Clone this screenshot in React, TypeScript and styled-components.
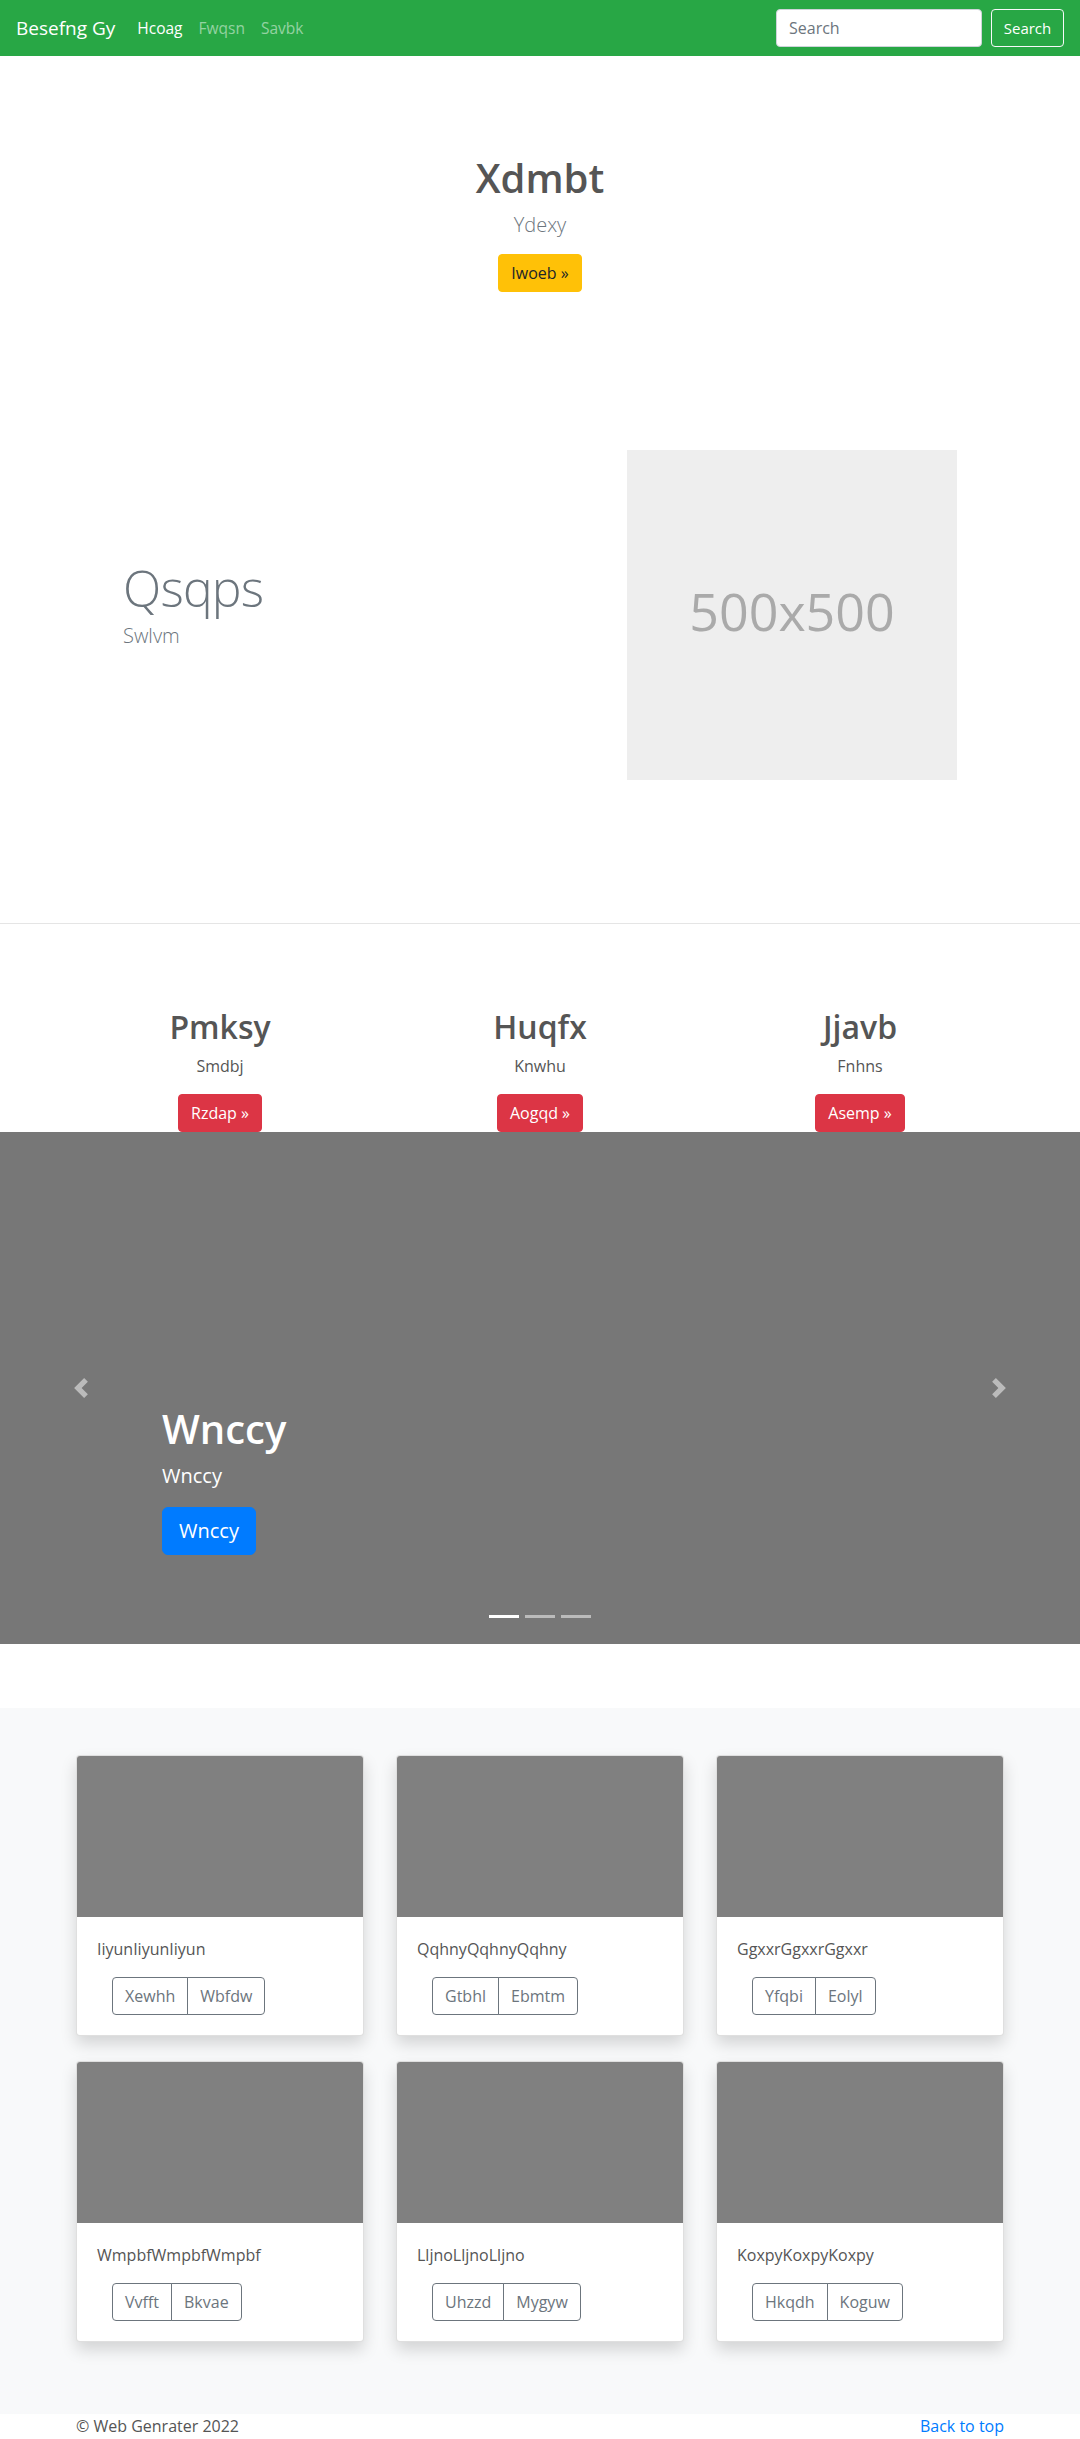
import React from "react";
import styled, { createGlobalStyle } from "styled-components";

const GlobalStyle = createGlobalStyle`
  * { box-sizing: border-box; }
  body {
    margin: 0;
    font-family: "Open Sans", "Noto Sans", "Liberation Sans", sans-serif;
    font-size: 16px;
    line-height: 1.5;
    color: #555;
    background: #fff;
  }
  h1, h2, p { margin-top: 0; }
`;

const Navbar = styled.nav`
  display: flex;
  align-items: center;
  height: 56px;
  padding: 8px 16px;
  background: #28a745;
`;
const Brand = styled.a`
  font-size: 19px;
  line-height: 30px;
  color: #fff;
  margin-right: 14px;
  text-decoration: none;
`;
const NavList = styled.div`
  display: flex;
`;
const NavLink = styled.a<{ $active?: boolean }>`
  padding: 8px;
  line-height: 24px;
  font-size: 15.5px;
  color: ${p => (p.$active ? "#fff" : "rgba(255,255,255,.5)")};
  text-decoration: none;
`;
const SearchForm = styled.form`
  display: flex;
  margin-left: auto;
`;
const SearchInput = styled.input`
  width: 206px;
  height: 38px;
  padding: 6px 12px;
  font: inherit;
  color: #495057;
  border: 1px solid #ced4da;
  border-radius: 4px;
  margin-right: 9px;
  &::placeholder { color: #6c757d; }
`;
const OutlineLight = styled.button`
  width: 73px;
  height: 38px;
  padding: 6px 0;
  font: inherit;
  font-size: 15px;
  color: #fff;
  background: transparent;
  border: 1px solid #f8f9fa;
  border-radius: 4px;
`;

const Btn = styled.button<{ $bg: string; $fg: string; $lg?: boolean }>`
  display: inline-block;
  font-family: inherit;
  font-size: ${p => (p.$lg ? "20px" : "16px")};
  line-height: ${p => (p.$lg ? "30px" : "24px")};
  padding: ${p => (p.$lg ? "8px 16px" : "6px 12px")};
  background: ${p => p.$bg};
  color: ${p => p.$fg};
  border: 1px solid ${p => p.$bg};
  border-radius: ${p => (p.$lg ? "6px" : "4px")};
`;

const Hero = styled.section`
  text-align: center;
  padding: 98px 0 80px;
`;
const HeroTitle = styled.h1`
  font-size: 40px;
  font-weight: 600;
  line-height: 1.2;
  margin-bottom: 8px;
  color: #555;
`;
const Lead = styled.p<{ $gap?: number }>`
  font-size: 20px;
  font-weight: 300;
  line-height: 30px;
  margin-bottom: ${p => p.$gap ?? 16}px;
  color: #6c757d;
`;

const Featurette = styled.section`
  max-width: 834px;
  margin: 78px auto 0;
  padding-bottom: 143px;
  display: grid;
  grid-template-columns: 1fr 330px;
  align-items: center;
`;
const FeatHeading = styled.h2`
  font-size: 50px;
  font-weight: 300;
  line-height: 1;
  letter-spacing: -0.8px;
  color: #6c757d;
  margin-bottom: 8px;
`;
const Placeholder = styled.div`
  width: 330px;
  height: 330px;
  padding-bottom: 8px;
  background: #eee;
  color: #aaa;
  font-size: 52px;
  display: flex;
  align-items: center;
  justify-content: center;
`;

const Divider = styled.hr`
  margin: 0 0 84px;
  border: 0;
  border-top: 1px solid rgba(0, 0, 0, 0.1);
`;

const Container = styled.div`
  width: 960px;
  margin: 0 auto;
  padding: 0 16px;
`;
const Marketing = styled.div`
  width: 960px;
  margin: 0 auto;
  display: grid;
  grid-template-columns: repeat(3, 1fr);
  text-align: center;
`;
const ColTitle = styled.h2`
  font-size: 32px;
  font-weight: 600;
  line-height: 1.2;
  margin-bottom: 8px;
  color: #555;
`;
const ColText = styled.p`
  margin-bottom: 16px;
`;

const Carousel = styled.div`
  position: relative;
  height: 512px;
  background: #777;
  margin-bottom: 64px;
`;
const Control = styled.div<{ $side: "left" | "right" }>`
  position: absolute;
  top: 0;
  bottom: 0;
  ${p => p.$side}: 0;
  width: 15%;
  display: flex;
  align-items: center;
  justify-content: center;
  opacity: 0.5;
`;
const Caption = styled.div`
  position: absolute;
  left: 15%;
  right: 15%;
  bottom: 69px;
  padding: 20px 0;
  color: #fff;
`;
const CaptionTitle = styled.h1`
  font-size: 40px;
  font-weight: 600;
  line-height: 1.2;
  margin-bottom: 8px;
`;
const CaptionText = styled.p`
  font-size: 20px;
  line-height: 30px;
  margin-bottom: 16px;
`;
const Indicators = styled.div`
  position: absolute;
  left: 0;
  right: 0;
  bottom: 26px;
  display: flex;
  justify-content: center;
  gap: 6px;
`;
const Indicator = styled.span<{ $active?: boolean }>`
  width: 30px;
  height: 3px;
  background: #fff;
  opacity: ${p => (p.$active ? 1 : 0.5)};
`;

const Album = styled.section`
  background: #f8f9fa;
  padding: 47px 0 72px;
`;
const CardGrid = styled.div`
  display: grid;
  grid-template-columns: repeat(3, 1fr);
  column-gap: 32px;
  row-gap: 25px;
`;
const Card = styled.div`
  background: #fff;
  border: 1px solid rgba(0, 0, 0, 0.125);
  border-radius: 4px;
  overflow: hidden;
  box-shadow: 0 8px 16px rgba(0, 0, 0, 0.15);
`;
const CardImage = styled.div`
  aspect-ratio: 16 / 9;
  background: #808080;
`;
const CardBody = styled.div`
  padding: 20px;
`;
const CardText = styled.p`
  margin-bottom: 16px;
`;
const BtnGroup = styled.div`
  display: inline-flex;
  margin-left: 15px;
`;
const GroupBtn = styled.button`
  font: inherit;
  height: 38px;
  padding: 6px 12px;
  color: #6c757d;
  background: transparent;
  border: 1px solid #6c757d;
  &:first-child { border-radius: 4px 0 0 4px; }
  &:last-child { border-radius: 0 4px 4px 0; margin-left: -1px; }
`;

const Footer = styled.footer`
  display: flex;
  justify-content: space-between;
  padding-bottom: 48px;
`;
const TopLink = styled.a`
  color: #007bff;
  text-decoration: none;
`;

const Chevron = ({ dir }: { dir: "prev" | "next" }) => (
  <svg width="20" height="20" viewBox="0 0 8 8" fill="#fff">
    <path
      d={
        dir === "prev"
          ? "M5.25 0l-4 4 4 4 1.5-1.5L4.25 4l2.5-2.5L5.25 0z"
          : "M2.75 0l-1.5 1.5L3.75 4l-2.5 2.5L2.75 8l4-4-4-4z"
      }
    />
  </svg>
);

const columns = [
  { title: "Pmksy", text: "Smdbj", btn: "Rzdap »" },
  { title: "Huqfx", text: "Knwhu", btn: "Aogqd »" },
  { title: "Jjavb", text: "Fnhns", btn: "Asemp »" },
];

const cards = [
  { text: "IiyunIiyunIiyun", a: "Xewhh", b: "Wbfdw" },
  { text: "QqhnyQqhnyQqhny", a: "Gtbhl", b: "Ebmtm" },
  { text: "GgxxrGgxxrGgxxr", a: "Yfqbi", b: "Eolyl" },
  { text: "WmpbfWmpbfWmpbf", a: "Vvfft", b: "Bkvae" },
  { text: "LljnoLljnoLljno", a: "Uhzzd", b: "Mygyw" },
  { text: "KoxpyKoxpyKoxpy", a: "Hkqdh", b: "Koguw" },
];

export default function App() {
  return (
    <>
      <GlobalStyle />
      <Navbar>
        <Brand href="#">Besefng Gy</Brand>
        <NavList>
          <NavLink $active href="#">Hcoag</NavLink>
          <NavLink href="#">Fwqsn</NavLink>
          <NavLink href="#">Savbk</NavLink>
        </NavList>
        <SearchForm onSubmit={e => e.preventDefault()}>
          <SearchInput placeholder="Search" />
          <OutlineLight type="submit">Search</OutlineLight>
        </SearchForm>
      </Navbar>

      <Hero>
        <HeroTitle>Xdmbt</HeroTitle>
        <Lead $gap={14}>Ydexy</Lead>
        <Btn $bg="#ffc107" $fg="#212529">Iwoeb »</Btn>
      </Hero>

      <Featurette>
        <div>
          <FeatHeading>Qsqps</FeatHeading>
          <Lead>Swlvm</Lead>
        </div>
        <Placeholder>500x500</Placeholder>
      </Featurette>

      <Divider />

      <Marketing>
        {columns.map(c => (
          <div key={c.title}>
            <ColTitle>{c.title}</ColTitle>
            <ColText>{c.text}</ColText>
            <Btn $bg="#dc3545" $fg="#fff">{c.btn}</Btn>
          </div>
        ))}
      </Marketing>

      <Carousel>
        <Control $side="left"><Chevron dir="prev" /></Control>
        <Control $side="right"><Chevron dir="next" /></Control>
        <Caption>
          <CaptionTitle>Wnccy</CaptionTitle>
          <CaptionText>Wnccy</CaptionText>
          <Btn $bg="#007bff" $fg="#fff" $lg>Wnccy</Btn>
        </Caption>
        <Indicators>
          <Indicator $active />
          <Indicator />
          <Indicator />
        </Indicators>
      </Carousel>

      <Album>
        <Container>
          <CardGrid>
            {cards.map(c => (
              <Card key={c.text}>
                <CardImage />
                <CardBody>
                  <CardText>{c.text}</CardText>
                  <BtnGroup>
                    <GroupBtn>{c.a}</GroupBtn>
                    <GroupBtn>{c.b}</GroupBtn>
                  </BtnGroup>
                </CardBody>
              </Card>
            ))}
          </CardGrid>
        </Container>
      </Album>

      <Container>
        <Footer>
          <span>© Web Genrater 2022</span>
          <TopLink href="#">Back to top</TopLink>
        </Footer>
      </Container>
    </>
  );
}
